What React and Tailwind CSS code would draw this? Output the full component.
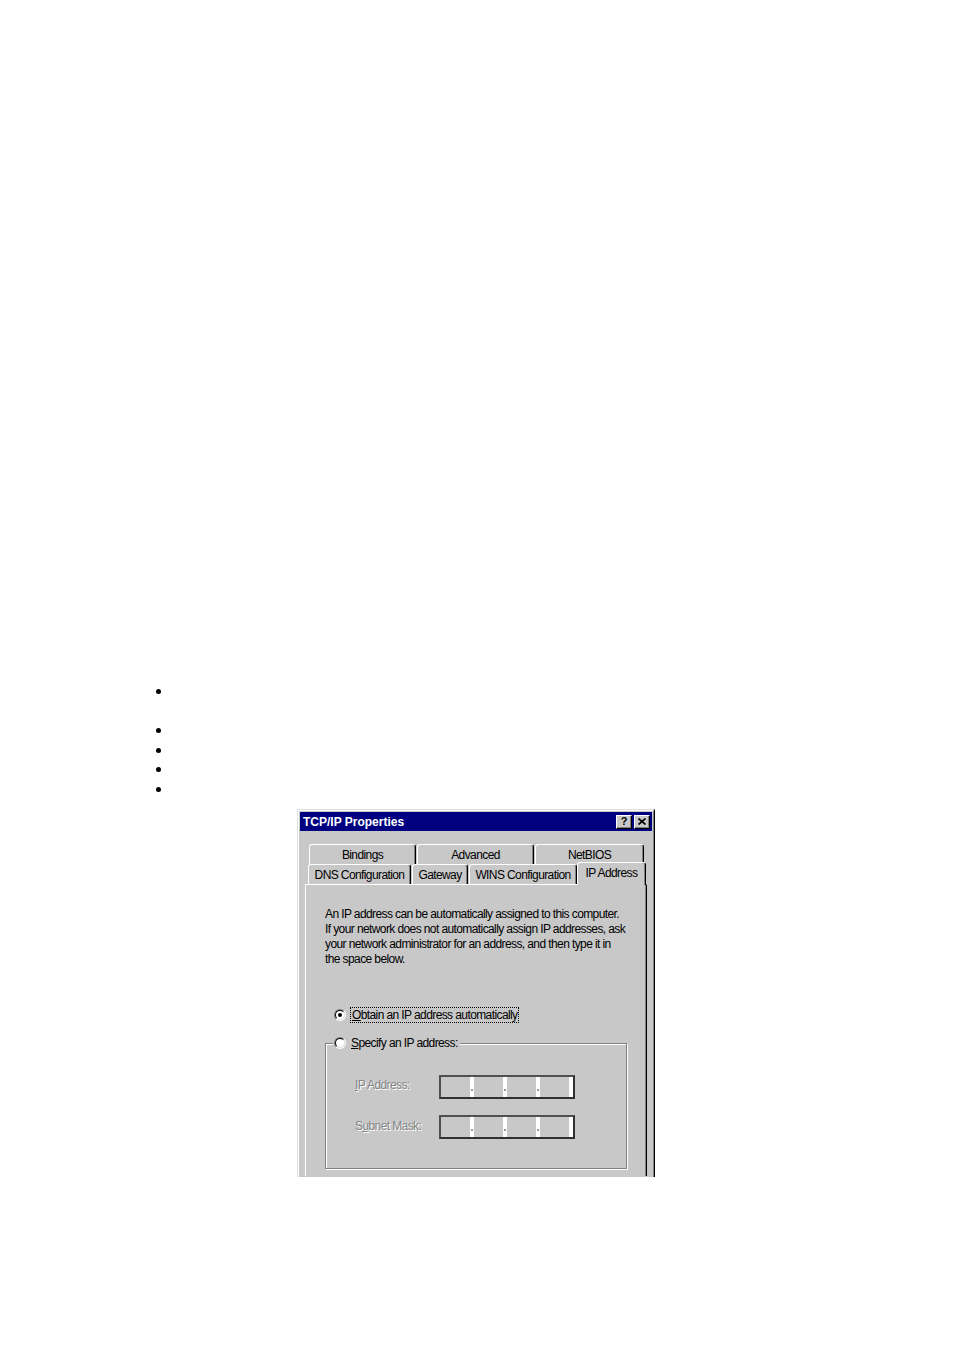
import React from 'react'

// Pagina di manuale: un elenco puntato vuoto e, sotto, la schermata della
// finestra "TCP/IP Properties" in stile Windows 95, tagliata in basso.

const FACE = "font-['Liberation_Sans',Arial,sans-serif] text-[12px] tracking-[-0.6px]"
const DISABLED = 'text-[#848484] [text-shadow:1px_1px_0_#ffffff]'

function Tab({ children, className = '', selected = false }) {
  return (
    <div
      className={`flex items-center justify-center rounded-t-[3px] border-l border-t border-r border-white border-r-black bg-[#c8c8c8] shadow-[inset_-1px_0_0_#808080] ${selected ? 'relative z-10 -mb-[1px] h-[23px] pb-[3px]' : 'h-[20px] pt-[1px]'} ${className}`}
    >
      {children}
    </div>
  )
}

function TitleButton({ children }) {
  return (
    <div className="flex h-[14px] w-[16px] items-center justify-center border border-t-white border-l-white border-r-black border-b-black bg-[#c8c8c8] shadow-[inset_-1px_-1px_0_#808080]">
      {children}
    </div>
  )
}

function Radio({ checked }) {
  return (
    <span className="flex h-[12px] w-[12px] shrink-0 rounded-full border border-t-[#808080] border-l-[#808080] border-r-white border-b-white">
      <span className="flex h-full w-full items-center justify-center rounded-full border border-t-black border-l-black border-r-[#dfdfdf] border-b-[#dfdfdf] bg-white">
        {checked && <span className="h-[4px] w-[4px] rounded-full bg-black" />}
      </span>
    </span>
  )
}

// Casella dell'indirizzo, disattivata: quattro ottetti separati da punti.
function IpField() {
  const Bar = () => (
    <div className="w-[4px] bg-white">
      <div className="ml-[1px] mt-[12px] h-[2px] w-[2px] bg-[#9a9a9a]" />
    </div>
  )
  return (
    <div className="flex h-[24px] w-[136px] border-2 border-t-[#505050] border-l-[#505050] border-r-[#303030] border-b-[#303030] bg-[#c8c8c8]">
      <div className="w-[29px]" />
      <Bar />
      <div className="w-[29px]" />
      <Bar />
      <div className="w-[29px]" />
      <Bar />
      <div className="w-[29px]" />
      <div className="w-[4px] bg-white" />
    </div>
  )
}

function Dialog() {
  return (
    <div className={`ml-[297px] mt-[10px] h-[368px] w-[358px] overflow-hidden border-l border-t border-r border-[#dfdfdf] border-r-black bg-[#c8c8c8] text-black ${FACE}`}>
      <div className="flex h-full flex-col border-l border-t border-r border-white border-r-[#808080] p-[1px]">
        <div className="flex h-[19px] items-center justify-between bg-[#000080] pl-[3px] pr-[2px]">
          <span className="text-[12px] font-bold tracking-[0px] text-white">TCP/IP Properties</span>
          <div className="flex gap-[2px]">
            <TitleButton>
              <span className="text-[11px] font-bold leading-none tracking-normal">?</span>
            </TitleButton>
            <TitleButton>
              <svg width="8" height="7" viewBox="0 0 8 7">
                <path d="M0.5 0.5 L7.5 6.5 M7.5 0.5 L0.5 6.5" stroke="black" strokeWidth="1.7" />
              </svg>
            </TitleButton>
          </div>
        </div>

        <div className="ml-[9px] mt-[13px] flex gap-[1px]">
          <Tab className="w-[107px]">Bindings</Tab>
          <Tab className="w-[117px]">Advanced</Tab>
          <Tab className="w-[109px]">NetBIOS</Tab>
        </div>
        <div className="ml-[8px] flex h-[20px] items-end gap-[1px]">
          <Tab className="w-[103px]">DNS Configuration</Tab>
          <Tab className="w-[56px]">Gateway</Tab>
          <Tab className="w-[108px]">WINS Configuration</Tab>
          <Tab selected className="-ml-[1px] w-[69px]">IP Address</Tab>
        </div>

        <div className="mx-[5px] flex-1 border-l border-t border-r border-white border-r-black pl-[19px] pt-[22px] shadow-[inset_-1px_0_0_#808080]">
          <p className="leading-[15px]">
            An IP address can be automatically assigned to this computer.<br />
            If your network does not automatically assign IP addresses, ask<br />
            your network administrator for an address, and then type it in<br />
            the space below.
          </p>

          <div className="ml-[9px] mt-[40px] flex h-[16px] items-center gap-[4px]">
            <Radio checked />
            <span className="border border-dotted border-black px-[1px] leading-[14px]">
              <u>O</u>btain an IP address automatically
            </span>
          </div>

          <fieldset className="mt-[12px] w-[302px] border border-[#808080] pb-[29px] shadow-[inset_1px_1px_0_#ffffff,1px_1px_0_#ffffff]">
            <legend className="ml-[7px] flex h-[16px] items-center gap-[5px] bg-[#c8c8c8] px-[1px] pr-[2px]">
              <Radio />
              <span>
                <u>S</u>pecify an IP address:
              </span>
            </legend>

            <div className="ml-[29px] mt-[24px] flex items-center">
              <span className={`mb-[4px] w-[84px] ${DISABLED}`}>
                <u>I</u>P Address:
              </span>
              <IpField />
            </div>
            <div className="ml-[29px] mt-[16px] flex items-center">
              <span className={`mb-[2px] w-[84px] ${DISABLED}`}>
                S<u>u</u>bnet Mask:
              </span>
              <IpField />
            </div>
          </fieldset>
        </div>
      </div>
    </div>
  )
}

export default function App() {
  return (
    <div className="min-h-[1350px] w-full bg-white pt-[682px]">
      <ul className="ml-[156px]">
        <li className="flex h-[39px] items-start">
          <span className="mt-[7px] h-[5px] w-[5px] rounded-full bg-black" />
        </li>
        <li className="flex h-[19.5px] items-center">
          <span className="h-[5px] w-[5px] rounded-full bg-black" />
        </li>
        <li className="flex h-[19.5px] items-center">
          <span className="h-[5px] w-[5px] rounded-full bg-black" />
        </li>
        <li className="flex h-[19.5px] items-center">
          <span className="h-[5px] w-[5px] rounded-full bg-black" />
        </li>
        <li className="flex h-[19.5px] items-center">
          <span className="h-[5px] w-[5px] rounded-full bg-black" />
        </li>
      </ul>
      <Dialog />
    </div>
  )
}
